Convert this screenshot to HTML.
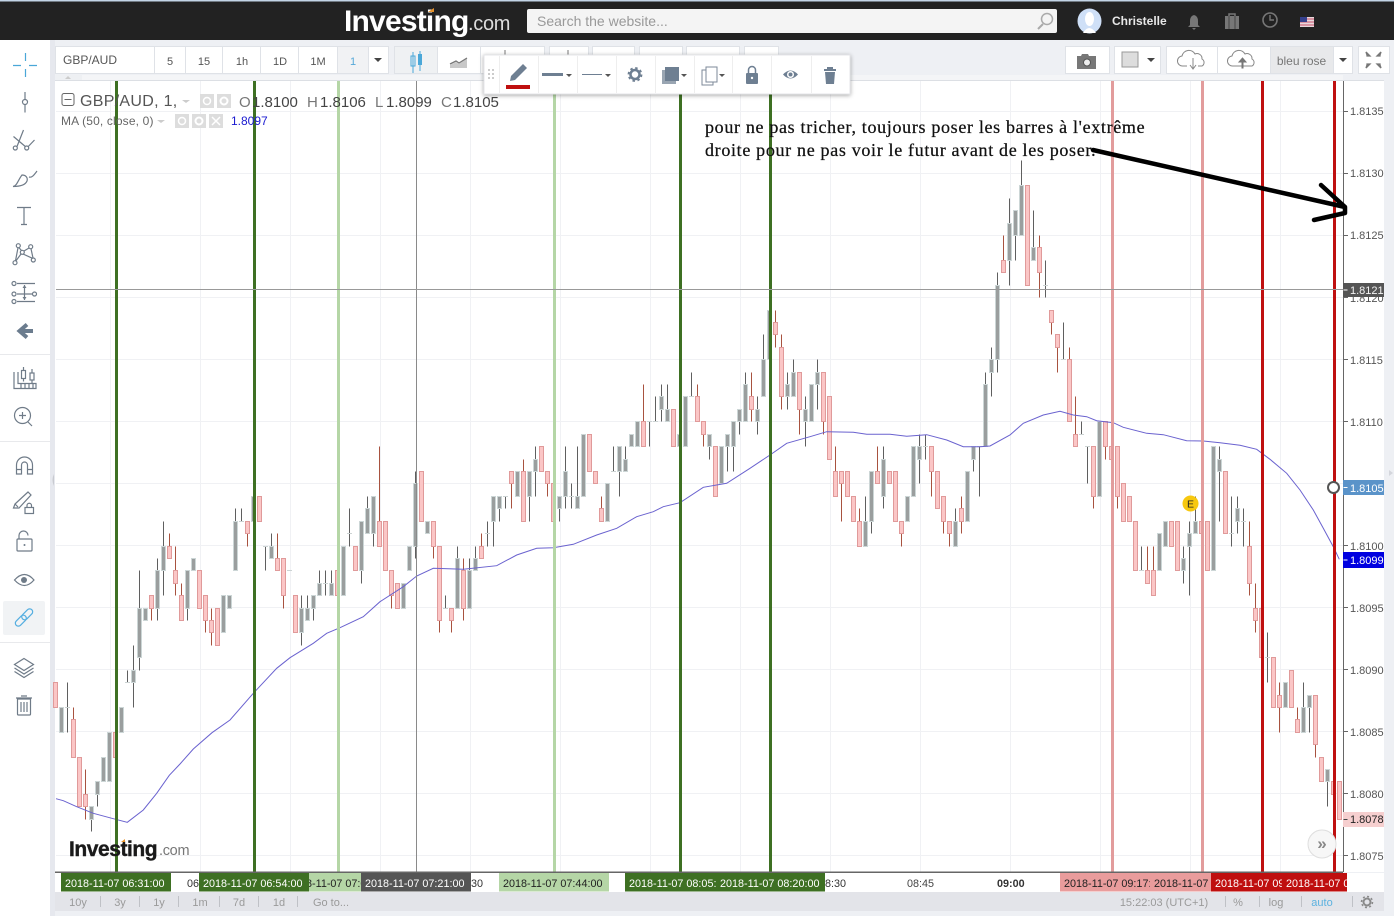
<!DOCTYPE html>
<html><head><meta charset="utf-8"><style>
html,body{margin:0;padding:0;background:#fff;width:1394px;height:916px;overflow:hidden}
svg{display:block}
text{font-family:"Liberation Sans",sans-serif}
.s{fill:none;stroke:#6f7b88;stroke-width:1.2}
.f{fill:#6f7b88}
.tb{font-size:11px;fill:#555;text-anchor:middle}
.px{font-size:11px;fill:#555}
.tm{font-size:10.8px}
.bt{font-size:11px;fill:#9a9a9a;text-anchor:middle}
.cell{fill:#fff;stroke:#dfe2e7}
</style></head><body>
<svg xmlns="http://www.w3.org/2000/svg" width="1394" height="916" viewBox="0 0 1394 916">
<rect width="1394" height="916" fill="#fff"/>
<rect x="50" y="40" width="1344" height="876" fill="#eef0f4"/>
<rect x="50" y="40" width="5" height="876" fill="#e6e8ee"/>
<rect y="0" width="1394" height="40" fill="#222"/>
<rect y="0" width="1394" height="1.5" fill="#c3d4e6"/>
<!-- logo -->
<text x="344" y="31" font-size="30" font-weight="bold" fill="#fff" letter-spacing="-.8">Investing</text>
<text x="468" y="30" font-size="20" fill="#ddd" letter-spacing="-.3">.com</text>
<path d="M428 12l6-4v4z" fill="#e8932a"/>
<!-- search -->
<rect x="527" y="9" width="530" height="24" rx="2" fill="#f4f4f4"/>
<text x="537" y="26" font-size="14" fill="#999">Search the website...</text>
<circle cx="1047" cy="19" r="5.5" fill="none" stroke="#aaa" stroke-width="1.5"/><path d="M1043 24l-5 5" stroke="#aaa" stroke-width="2"/>
<!-- user -->
<ellipse cx="1089.500" cy="21" rx="12" ry="12.500" fill="#cfe0f7"/>
<ellipse cx="1089.500" cy="19" rx="4.500" ry="7" fill="#fff"/><path d="M1083 33q6-10 13 0z" fill="#fff"/>
<text x="1112" y="25" font-size="12" font-weight="bold" fill="#e8e8e8">Christelle</text>
<path d="M1194 15q-4 1-4 6v4l-2 2h12l-2-2v-4q0-5-4-6z M1192 28h4l-2 2z" fill="#777"/>
<path d="M1225 16h14v13h-14z" fill="#777"/><path d="M1229 16v-2h6v2" fill="none" stroke="#777" stroke-width="1.500"/><path d="M1229 16v13M1235 16v13" stroke="#444"/>
<circle cx="1270" cy="20" r="7" fill="none" stroke="#777" stroke-width="1.600"/><path d="M1270 15v5h4" fill="none" stroke="#777" stroke-width="1.400"/>
<rect x="1300" y="17" width="14" height="10" fill="#e8d8dc"/><path d="M1300 19h14M1300 22h14M1300 25h14" stroke="#c8506a" stroke-width="1"/><rect x="1300" y="17" width="7" height="5" fill="#35408c"/>
<!-- toolbar left -->
<rect x="55.500" y="46.500" width="333" height="27" class="cell"/>
<path d="M154.500 47v27M185.500 47v27M222.500 47v27M260.500 47v27M298.500 47v27M337.500 47v27M368.500 47v27" stroke="#dfe2e7"/>
<rect x="338" y="47" width="30" height="26" fill="#f1f2f4"/>
<text x="63" y="64" font-size="12" fill="#555">GBP/AUD</text>
<text x="170" y="65" class="tb">5</text><text x="204" y="65" class="tb">15</text><text x="242" y="65" class="tb">1h</text><text x="280" y="65" class="tb">1D</text><text x="318" y="65" class="tb">1M</text><text x="353" y="65" class="tb" style="fill:#55a8d8">1</text>
<path d="M374 58h8l-4 4z" fill="#444"/>
<rect x="394.500" y="46.500" width="43" height="27" fill="#eff1f3" stroke="#dfe2e7"/>
<rect x="437.500" y="46.500" width="43" height="27" class="cell"/>
<path d="M411 56h4v10h-4zM413 52v21" fill="none" stroke="#4aa7d8"/><rect x="418" y="54" width="4" height="11" fill="#4aa7d8"/><path d="M420 51v20" stroke="#4aa7d8"/>
<path d="M450 68v-3l6-3 3 2 8-6v10z" fill="#c8c8c8"/><path d="M450 64l6-3 3 2 8-5" fill="none" stroke="#777" stroke-width="1.300"/>
<rect x="480.500" y="46.500" width="64" height="27" class="cell"/><rect x="549.500" y="46.500" width="39" height="27" class="cell"/><rect x="592.500" y="46.500" width="42" height="27" class="cell"/><rect x="639.500" y="46.500" width="43" height="27" class="cell"/><rect x="686.500" y="46.500" width="53" height="27" class="cell"/><rect x="744.500" y="46.500" width="34" height="27" class="cell"/>
<path d="M505 50v5M568 50v5M634 0" stroke="#777"/>
<!-- toolbar right -->
<rect x="1065.500" y="46.500" width="44" height="27" class="cell"/>
<rect x="1114.500" y="46.500" width="46" height="27" class="cell"/>
<rect x="1166.500" y="46.500" width="186" height="27" class="cell"/>
<rect x="1271" y="47" width="62" height="26" fill="#e8e9eb"/>
<path d="M1217.500 47v27M1270.500 47v27M1333.500 47v27" stroke="#dfe2e7"/>
<rect x="1358.500" y="46.500" width="31" height="27" class="cell"/>
<path d="M1077 56h4l1-2h6l1 2h7v13h-19z" fill="#777"/><circle cx="1087" cy="62.500" r="3.500" fill="#eee" stroke="#555"/>
<rect x="1122" y="52" width="16" height="15" fill="#ddd" stroke="#999"/><path d="M1147 58h8l-4 4z" fill="#444"/>
<path d="M1187 66h-4a5 5 0 0 1-1-10 7 7 0 0 1 13-2 5 5 0 0 1 7 5 4 4 0 0 1 0 7h-4" fill="none" stroke="#888"/><path d="M1193 58v10m-3-3l3 4 3-4" fill="none" stroke="#888"/>
<path d="M1237 66h-4a5 5 0 0 1-1-10 7 7 0 0 1 13-2 5 5 0 0 1 7 5 4 4 0 0 1 0 7h-4z" fill="none" stroke="#888"/><path d="M1242 68v-6h-3l3.500-4 3.500 4h-3v6z" fill="#777" stroke="#777"/>
<text x="1301.500" y="65" font-size="12" fill="#777" text-anchor="middle">bleu rose</text>
<path d="M1339 58h8l-4 4z" fill="#444"/>
<path d="M1366 52l4 4h-3v-1zM1381 52l-4 4h3v-1zM1366 68l4-4h-3v1zM1381 68l-4-4h3v1z" fill="#777" stroke="#777" stroke-width="1.300"/>
<!-- chart bg -->
<rect x="56" y="75" width="1287" height="5" fill="#f4f5f7"/><rect x="56" y="75" width="26" height="5" fill="#eef0f3"/><path d="M65 79l3-3 3 3z" fill="#ccc"/>
<rect x="55" y="80" width="1329" height="792" fill="#fff"/>
<rect x="55" y="80" width="1329" height="1" fill="#dcdfe4"/>
<g id="grid" stroke="#f0f1f4" stroke-width="1">
<path d="M110.500 81v791M200.500 81v791M290.500 81v791M380.500 81v791M470.500 81v791M560.500 81v791M650.500 81v791M740.500 81v791M830.500 81v791M920.500 81v791M1010.500 81v791M1100.500 81v791M1190.500 81v791M1280.500 81v791"/>
<path d="M56 111.500h1287M56 173.500h1287M56 235.500h1287M56 297.500h1287M56 359.500h1287M56 421.500h1287M56 483.500h1287M56 545.500h1287M56 607.500h1287M56 669.500h1287M56 731.500h1287M56 793.500h1287M56 855.500h1287"/>
</g>
<g id="candles"></g>
<polyline fill="none" stroke="#6a62cf" stroke-width="1" points="56,798.700 63.300,800.700 76.700,806.700 93.300,813.300 113.300,818.700 127.300,822.300 143.300,810 156.700,793.300 169.300,775.300 180,764 193.300,749 212,732.700 230,720 253.300,693.300 276.700,668.300 290,657.700 313.300,643.300 326.700,633.300 340,627.700 363.300,616.700 380,601.700 403.300,586.700 416.700,576 433.300,568.300 463.300,569.300 496.700,565.700 516.700,555 536.700,548.300 553.300,547.700 573.300,544.300 596.700,535 616.700,528.300 636.700,516.700 653.300,511.700 663.300,506.700 680,502.700 703.300,487.300 726.700,483.300 750,468.300 770,455 786.700,443.300 810,436.700 826.700,431.700 853.300,432.300 866.700,434.300 890,434.300 906.700,436.300 926.700,434.700 946.700,440 963.300,446.700 980,446.700 990,446 1010,435 1023.300,423.300 1043.300,415 1060,411.300 1073.300,415 1086.700,416.700 1096.700,420.700 1113.300,422.700 1123.300,427.300 1146.700,433.300 1163.300,434.700 1186.700,440.700 1203.300,441 1220,442.700 1240,445.300 1256.700,449.300 1270,459.300 1286.700,473.300 1300,490 1313.300,510 1323.300,528.300 1333.300,546.700 1339.300,559.300"/>
<!-- vertical drawing lines -->
<rect x="115" y="81" width="3" height="791" fill="#3e7023"/>
<rect x="253" y="81" width="3" height="791" fill="#3e7023"/>
<rect x="337" y="81" width="3" height="791" fill="#b5d6a6"/>
<rect x="416" y="81" width="1" height="791" fill="#8a8a8a"/>
<rect x="553" y="81" width="3" height="791" fill="#b5d6a6"/>
<rect x="679" y="81" width="3" height="791" fill="#3e7023"/>
<rect x="769" y="81" width="3" height="791" fill="#3e7023"/>
<rect x="1111" y="81" width="3" height="791" fill="#e29c9c"/>
<rect x="1201" y="81" width="3" height="791" fill="#e29c9c"/>
<rect x="1261" y="81" width="3" height="791" fill="#bf1010"/>
<rect x="1333" y="81" width="3" height="791" fill="#bf1010"/>
<rect x="56" y="289" width="1287" height="1" fill="#999"/>
<!-- legend -->
<rect x="62" y="93.500" width="12" height="12" rx="2" fill="#fff" stroke="#666"/><path d="M64.500 99.500h7" stroke="#666"/>
<text x="80" y="106" font-size="16" fill="#555" letter-spacing=".3">GBP/AUD, 1,</text>
<path d="M182 100h8l-4 3z" fill="#ccc"/>
<rect x="200" y="94" width="14" height="14" fill="#ddd"/><circle cx="207" cy="101" r="3.500" fill="none" stroke="#fff" stroke-width="1.500"/>
<rect x="217" y="94" width="14" height="14" fill="#ddd"/><circle cx="224" cy="101" r="3.500" fill="none" stroke="#fff" stroke-width="2"/>
<g font-size="15">
<text x="239" y="107" fill="#777">O</text><text x="252" y="107" fill="#444">1.8100</text>
<text x="307" y="107" fill="#777">H</text><text x="320" y="107" fill="#444">1.8106</text>
<text x="375" y="107" fill="#777">L</text><text x="386" y="107" fill="#444">1.8099</text>
<text x="441" y="107" fill="#777">C</text><text x="453" y="107" fill="#444">1.8105</text>
</g>
<text x="61" y="125" font-size="12" fill="#666" letter-spacing=".15">MA (50, close, 0)</text>
<path d="M157 120h8l-4 3z" fill="#ccc"/>
<rect x="175" y="114" width="14" height="14" fill="#ddd"/><circle cx="182" cy="121" r="3.500" fill="none" stroke="#fff" stroke-width="1.500"/>
<rect x="192" y="114" width="14" height="14" fill="#ddd"/><circle cx="199" cy="121" r="3.500" fill="none" stroke="#fff" stroke-width="2"/>
<rect x="209" y="114" width="14" height="14" fill="#ddd"/><path d="M212 117l8 8m0-8l-8 8" stroke="#fff" stroke-width="1.500"/>
<text x="231" y="125" font-size="12" fill="#1a1ad0">1.8097</text>
<!-- annotation -->
<text x="705" y="133" font-size="18" fill="#111" style="font-family:'Liberation Serif',serif" letter-spacing=".67" stroke="#111" stroke-width=".25">pour ne pas tricher, toujours poser les barres à l'extrême</text>
<text x="705" y="156" font-size="18" fill="#111" style="font-family:'Liberation Serif',serif" letter-spacing=".67" stroke="#111" stroke-width=".25">droite pour ne pas voir le futur avant de les poser.</text>
<!-- E badge -->
<circle cx="1190.500" cy="503.500" r="8" fill="#f7c80f"/><text x="1190.500" y="507.500" font-size="10.500" text-anchor="middle" fill="#222">E</text>
<!-- logo chart -->
<text x="69" y="856" font-size="21" font-weight="bold" fill="#1a1a1a" letter-spacing="-.45" stroke="#1a1a1a" stroke-width=".4">Investing</text>
<text x="159" y="855" font-size="14.500" fill="#777" letter-spacing="-.3">.com</text>
<path d="M121 842l4-3v3z" fill="#e8932a"/>
<!-- scroll btn -->
<circle cx="1322" cy="844" r="14" fill="#f7f7f7" stroke="#dedede"/>
<text x="1322" y="849" font-size="17" text-anchor="middle" fill="#888" font-weight="bold">»</text>
<!-- price axis -->
<rect x="1343.500" y="81" width="41" height="791" fill="#fff"/>
<rect x="1343" y="81" width="1" height="791" fill="#666"/>
<g stroke="#666"><path d="M1344 111.500h4M1344 173.500h4M1344 235.500h4M1344 297.500h4M1344 359.500h4M1344 421.500h4M1344 545.500h4M1344 607.500h4M1344 669.500h4M1344 731.500h4M1344 793.500h4M1344 855.500h4"/></g>
<g class="px">
<text class="px" x="1350" y="115">1.8135</text><text class="px" x="1350" y="177">1.8130</text><text class="px" x="1350" y="239">1.8125</text><text class="px" x="1350" y="302">1.8120</text><text class="px" x="1350" y="364">1.8115</text><text class="px" x="1350" y="426">1.8110</text><text class="px" x="1350" y="550">1.8100</text><text class="px" x="1350" y="612">1.8095</text><text class="px" x="1350" y="674">1.8090</text><text class="px" x="1350" y="736">1.8085</text><text class="px" x="1350" y="798">1.8080</text><text class="px" x="1350" y="860">1.8075</text>
</g>
<rect x="1343" y="283" width="44" height="14" fill="#555"/><path d="M1343.500 290h4" stroke="#fff"/><text x="1350" y="294" font-size="11" fill="#f4f4f4">1.8121</text>
<rect x="1343" y="480" width="44" height="15" fill="#5a93c9"/><path d="M1343.500 487.500h4" stroke="#fff"/><text x="1350" y="492" font-size="11" fill="#fff">1.8105</text>
<rect x="1343" y="552" width="44" height="16" fill="#0000e0"/><path d="M1343.500 560h4" stroke="#fff"/><text x="1350" y="564" font-size="11" fill="#fff">1.8099</text>
<rect x="1343" y="812" width="44" height="15" fill="#f6cfcf"/><path d="M1343.500 819.500h4" stroke="#444"/><text x="1350" y="823" font-size="11" fill="#222">1.8078</text>
<circle cx="1333.500" cy="487.500" r="5.500" fill="#fff" stroke="#555" stroke-width="2"/>
<!-- arrow -->
<path d="M1093 150 L1345 207 M1321 185 L1345 207 L1345 213 L1314 220" fill="none" stroke="#000" stroke-width="4.500" stroke-linecap="round" stroke-linejoin="round"/>
<rect x="1384" y="80" width="10" height="836" fill="#eef0f4"/><path d="M1389 470l4 3-4 3z" fill="#d4d6dc"/>
<path d="M54 474q-3 6 0 12z" fill="#c8cad0"/>
<!-- time axis -->
<rect x="55" y="873" width="1329" height="19" fill="#fff"/>
<rect x="55" y="871.500" width="1288" height="1.500" fill="#666"/>
<g stroke="#666"><path d="M116.500 872v4M254.500 872v4M338.500 872v4M416.500 872v4M554.500 872v4M680.500 872v4M770.500 872v4M1112.500 872v4M1202.500 872v4M1262.500 872v4M1334.500 872v4"/></g>
<text class="tm" x="187" y="887" fill="#333">06</text>
<text class="tm" x="471" y="887" fill="#333">30</text>
<text class="tm" x="825" y="887" fill="#333">8:30</text>
<text class="tm" x="907" y="887" fill="#444">08:45</text>
<text class="tm" x="997" y="887" fill="#333" font-weight="bold">09:00</text>
<rect x="61" y="873" width="110" height="18.500" fill="#3e7023"/><text class="tm" x="65" y="887" fill="#fff">2018-11-07 06:31:00</text>
<rect x="199" y="873" width="110" height="18.500" fill="#3e7023"/><text class="tm" x="203" y="887" fill="#fff">2018-11-07 06:54:00</text>
<svg x="309" y="873" width="52" height="19"><rect width="52" height="18.500" fill="#b5d6a6"/><text class="tm" x="-21" y="14" fill="#222">2018-11-07 07:00:00</text></svg>
<rect x="361" y="873" width="110" height="18.500" fill="#555"/><text class="tm" x="365" y="887" fill="#fff">2018-11-07 07:21:00</text>
<rect x="499" y="873" width="110" height="18.500" fill="#b5d6a6"/><text class="tm" x="503" y="887" fill="#222">2018-11-07 07:44:00</text>
<svg x="625" y="873" width="91" height="19"><rect width="91" height="18.500" fill="#3e7023"/><text class="tm" x="4" y="14" fill="#fff">2018-11-07 08:05:00</text></svg>
<rect x="716" y="873" width="109" height="18.500" fill="#3e7023"/><text class="tm" x="720" y="887" fill="#fff">2018-11-07 08:20:00</text>
<svg x="1060" y="873" width="90" height="19"><rect width="90" height="18.500" fill="#e99c9c"/><text class="tm" x="4" y="14" fill="#222">2018-11-07 09:17:00</text></svg>
<svg x="1150" y="873" width="61" height="19"><rect width="61" height="18.500" fill="#e99c9c"/><text class="tm" x="4" y="14" fill="#222">2018-11-07 09:32:00</text></svg>
<svg x="1211" y="873" width="71" height="19"><rect width="71" height="18.500" fill="#bf0f0f"/><text class="tm" x="4" y="14" fill="#fff">2018-11-07 09:42:00</text></svg>
<svg x="1282" y="873" width="65" height="19"><rect width="65" height="18.500" fill="#bf0f0f"/><text class="tm" x="4" y="14" fill="#fff">2018-11-07 09:54:00</text></svg>
<!-- bottom bar -->
<rect x="55" y="892" width="1329" height="19" fill="#e3e4e9"/>
<text class="bt" x="78" y="906">10y</text><text class="bt" x="120" y="906">3y</text><text class="bt" x="159" y="906">1y</text><text class="bt" x="200" y="906">1m</text><text class="bt" x="239" y="906">7d</text><text class="bt" x="279" y="906">1d</text><text class="bt" x="331" y="906">Go to...</text>
<text class="bt" x="1164" y="906">15:22:03 (UTC+1)</text><text class="bt" x="1238" y="906">%</text><text class="bt" x="1276" y="906">log</text><text class="bt" x="1322" y="906" style="fill:#5cb2e0">auto</text>
<path d="M100.500 896v11M139.500 896v11M178.500 896v11M219.500 896v11M258.500 896v11M297.500 896v11M1225.500 896v11M1259.500 896v11M1301.500 896v11M1352.500 896v11" stroke="#bfc1c6"/>
<circle cx="1367" cy="902" r="3.500" fill="none" stroke="#8a8a8a" stroke-width="2"/><circle cx="1367" cy="902" r="5.500" fill="none" stroke="#8a8a8a" stroke-width="1.500" stroke-dasharray="2 2.300"/>
<!-- floating toolbar -->
<rect x="484" y="55" width="366" height="39" fill="#fff" stroke="#e4e5e8" style="filter:drop-shadow(0 1px 2px rgba(0,0,0,.35))"/>
<path d="M499.500 56v37M538.500 56v37M577.500 56v37M616.500 56v37M655.500 56v37M694.500 56v37M732.500 56v37M771.500 56v37M811.500 56v37" stroke="#eee"/>
<g fill="#ccc"><rect x="488" y="69" width="2" height="2"/><rect x="492" y="69" width="2" height="2"/><rect x="488" y="73" width="2" height="2"/><rect x="492" y="73" width="2" height="2"/><rect x="488" y="77" width="2" height="2"/><rect x="492" y="77" width="2" height="2"/></g>
<path d="M510 81l1-5 12-12 4 4-12 12z" fill="#6e7f92"/><rect x="506" y="85" width="24" height="4" fill="#bf0f0f"/>
<rect x="542" y="73" width="21" height="3" fill="#6e7f92"/><path d="M566 74h6l-3 3z" fill="#555"/>
<rect x="582" y="74" width="20" height="1" fill="#6e7f92"/><path d="M605 74h6l-3 3z" fill="#555"/>
<circle cx="635" cy="74.500" r="4.500" fill="none" stroke="#6e7f92" stroke-width="2.500"/><circle cx="635" cy="74.500" r="6.500" fill="none" stroke="#6e7f92" stroke-width="1.800" stroke-dasharray="2.500 2.600"/>
<rect x="662" y="70" width="14" height="14" fill="#6e7f92" opacity=".7"/><rect x="665" y="67" width="14" height="14" fill="#6e7f92"/><path d="M681 74h6l-3 3z" fill="#555"/>
<rect x="702" y="70" width="11" height="15" fill="#fff" stroke="#7d8a99"/><rect x="706" y="67" width="11" height="15" fill="#fff" stroke="#7d8a99"/><path d="M719 74h6l-3 3z" fill="#555"/>
<rect x="746" y="73" width="12" height="11" rx="1" fill="#6e7f92"/><path d="M748.500 73v-3a3.500 3.500 0 0 1 7 0v3" fill="none" stroke="#6e7f92" stroke-width="1.500"/><circle cx="752" cy="78" r="1.200" fill="#fff"/>
<path d="M783 74.500q7.500-8 15 0q-7.500 8-15 0z" fill="#6e7f92"/><circle cx="790.500" cy="74.500" r="3.500" fill="#fff"/><circle cx="790.500" cy="74.500" r="2" fill="#6e7f92"/>
<path d="M824 69h12v2h-12zM825 72h10l-1 12h-8z" fill="#6e7f92"/><rect x="827" y="67" width="6" height="2" fill="#6e7f92"/>
<!-- sidebar -->
<rect x="0" y="40" width="50" height="876" fill="#fff"/>
<path d="M13 65.500h8M29 65.500h8M25.500 53v8M25.500 69v8" stroke="#4aa7d8" stroke-width="1.200"/>
<path d="M25 92v7.500M25 104.500v8" class="s"/><circle cx="25" cy="102" r="2.500" class="s"/>
<g class="s"><circle cx="15.300" cy="148" r="2"/><circle cx="26.700" cy="148" r="2"/><path d="M17 146.500L23.500 130M28.300 146.500L34.500 140M13.500 136.500L25.300 146.500"/></g>
<path d="M13 186.500C17 186 18 180 22 175C26 175 28 178 27 181C25 186 18 186.500 13 186.500ZM29 177C32 178 34 175 37 171" class="s"/>
<path d="M17 207.500h14M24 207.500v17M21 224.500h6" class="s"/>
<g class="s"><circle cx="18.300" cy="245.700" r="2"/><circle cx="30.700" cy="246.700" r="2"/><circle cx="22.300" cy="252.300" r="2"/><circle cx="15" cy="262.700" r="2"/><circle cx="33.300" cy="260" r="2"/><path d="M18.800 247.500L21.500 250.500M24 251L29 248M23 254L32.500 258.300M16 260.800L21 254M15.500 260.800L18 247.800M31 248.700L33 258"/></g>
<g class="s"><circle cx="14" cy="283.500" r="2"/><circle cx="14" cy="294" r="2"/><circle cx="14" cy="301.500" r="2"/><circle cx="34.500" cy="294" r="2"/><path d="M17 283.500h18M17 294h15M17 301.500h18M24.500 285v15"/></g>
<path d="M22.500 288l2-3 2 3zM22.500 297l2 3 2-3z" class="f"/>
<path d="M27 324.500L19.500 331L27 337.500M20 331H33" fill="none" stroke="#6b7c8e" stroke-width="4"/>
<rect x="0" y="354" width="50" height="1" fill="#e8e9ec"/>
<g class="s"><path d="M14 372v16.500h22v-5H18V372M21 384v4M25 384v4M29 384v4M33 384v4"/><rect x="21.500" y="370.500" width="4" height="8"/><path d="M23.500 367v3.500M23.500 378.500v3"/><rect x="30" y="373" width="4" height="7"/><path d="M32 369v4M32 380v3"/></g>
<g class="s"><circle cx="22.500" cy="415.500" r="8"/><path d="M19 415.500h7M22.500 412v7M28 422l4 4"/></g>
<rect x="0" y="441" width="50" height="1" fill="#e8e9ec"/>
<path d="M16.500 474V465A8 8 0 0 1 32.500 465V474H27.500V465A3 3 0 0 0 21.500 465V474ZM16.500 469.500h5M27.500 469.500h5" class="s"/>
<path d="M13.500 508l1.500-4 13-12 3 3-12 13zM15 504l3 3" class="s"/><rect x="25" y="507.500" width="8.500" height="6" class="s"/><path d="M27 507.500v-2a2 2 0 0 1 4.500 0v2" class="s"/>
<rect x="17" y="539" width="15" height="12" rx="1" class="s"/><path d="M19 539v-3.500a4.500 4.500 0 0 1 9 0" class="s"/><circle cx="24.500" cy="545" r="1" class="f"/>
<path d="M14.500 580q10-11 19.500 0q-9.500 11-19.500 0z" class="s"/><circle cx="24" cy="580" r="3" class="f"/>
<rect x="3" y="601" width="42" height="34" rx="2" fill="#f1f3f5"/>
<g transform="rotate(-45 24 617.500)" fill="none" stroke="#55aee0" stroke-width="1.200"><rect x="13" y="614.500" width="13" height="6" rx="3"/><rect x="22" y="614.500" width="13" height="6" rx="3"/></g>
<rect x="0" y="642" width="50" height="1" fill="#e8e9ec"/>
<path d="M24 658.500l9.500 6-9.500 6-9.500-6zM14.500 668l9.500 6 9.500-6M14.500 671.500l9.500 6 9.500-6" class="s"/>
<path d="M17.500 699h13v15q0 1-1 1h-11q-1 0-1-1zM16 698h16M21 696h6M21 702v10M24 702v10M27 702v10" class="s"/>
</svg>
<script>
var D="p 89 87;g 87 85;d 87 89 85;p 86 83 87;p 83 79;p 80 79 82 78;g 79 78 0 77;g 81 80 0 79;g 83 81;g 85 81;p 85 83 0 82;g 87 85;d 89 90 89;g 90 89 92 87;g 95 91 98 90;g 95 94;p 96 95 0 94;g 98 95 99 94;g 100 98 102 96;p 100 99 101;p 98 97 100 96;p 96 94 97;g 98 95 0 94;g 99 98;p 98 95;p 96 94 0 93;p 94 93 95 92;p 95 92;g 96 93;g 96 95;g 102 98 103;d 102 103 102;p 102 101 0 100;g 104 102;p 104 102;d 100 100 98;g 100 99 101;p 99 98 101;p 99 96 0 95;d 98 98 98;p 96 93;g 95 93 96 92;g 95 94 96;g 96 95 0 94;g 97 96 98;d 97 98 96;g 97 96 98;p 98 96;g 100 96;d 101 103 100;p 100 98;g 102 98 0 97;g 103 101 104;g 104 101 0 100;p 102 100 108;p 102 98;p 98 96 0 95;p 97 95;g 97 95;g 100 98;g 105 100 106 99;p 106 102;g 102 101;p 102 100 0 99;p 100 94 0 93;d 95 96 95;p 95 94 0 93;g 99 95 100;p 98 95 99 94;g 98 95 99;g 99 98 100;p 100 99 101;d 101 102 100;g 104 102 0 100;g 104 103 0 102;d 104 104 103;p 106 105 0 103;g 106 104;p 106 102 107;g 106 104 0 102;g 107 106 108 104;p 108 106;p 106 105 0 104;p 105 102;g 104 103 0 102;g 106 104 108 103;d 104 105 103;g 104 103 108;g 109 104;p 109 106;p 106 105;p 103 102 104;g 105 102;d 106 108 106;g 108 106 0 104;g 107 106 108;g 109 108;g 110 108;p 110 108 113;d 110 110 108;d 110 112 110;g 112 111 113 110;g 111 110 113;p 111 108;g 109 108;g 112 108;d 112 114 112;p 112 110 113;p 110 109 0 108;g 109 108 0 107;p 108 104;g 108 105;g 109 108 0 106;g 110 108 0 106;g 111 110 0 109;g 113 110 114;p 112 111 114 110;g 111 110 112 109;g 115 112 117;g 119 115;p 118 117 119 116;p 116 112 117 111;g 113 112 114 111;g 114 112 115;p 114 111 0 109;g 111 110 112 108;g 113 110;g 114 113 115 111;p 114 110 0 109;p 112 107;p 106 104 108;p 106 105 0 102;p 106 104;p 104 102;p 102 100 103;g 102 100 104;g 106 102 0 101;p 106 105 108;g 107 104 108 103;p 106 105;p 106 102;p 102 101 0 100;g 104 102;g 108 104;g 108 107 109 105;d 108 109 107;p 108 106 0 104;p 106 103;p 104 102 0 101;p 102 101 0 100;g 102 100 103;p 103 102 104 101;g 106 102;g 108 107 0 106;d 108 108 104;g 113 108 114;g 115 114 116 112;g 121 115 122 114;p 123 122 125;g 126 123 128 121;g 127 125 0 123;g 129 125 131;p 129 121;g 124 123 127;p 124 122 125 120;d 121 123 120;p 119 118 0 117;p 117 116 0 114;d 115 118 115;p 115 110 116;p 109 108 112;d 109 110 109;d 108 108 105;p 108 104 0 103;g 110 104;p 110 108 0 107;p 108 107 110 106;p 108 104 0 103;p 105 102;p 104 102;p 102 98;d 98 100 98;p 98 97 100;p 98 96 100;g 101 98;g 102 100;p 102 100;p 102 98;g 99 98 100 97;g 101 100 102 96;g 102 101 104;p 102 101 104;p 102 98;g 108 98;g 107 106 108 102;p 106 101;d 101 104 100;g 103 102 104 101;d 102 103 100;p 100 97 102 96;p 95 94 97 93;p 95 91;d 91 93 89;p 91 87;p 88 87 89 85;g 89 87;p 90 87;p 86 85 87;g 87 85 89;g 88 87 0 85;p 88 84 0 83;p 83 81;g 82 81 0 79;p 81 80;p 81 78".split(";");
function Y(p){return Math.round(545.5+(100-p)*12.42)+.5;}
var NS="http://www.w3.org/2000/svg",G=document.getElementById("candles");
function el(n,o){var e=document.createElementNS(NS,n);for(var k in o)e.setAttribute(k,o[k]);G.appendChild(e);}
for(var i=0;i<D.length;i++){
 var a=D[i].split(" "),t=a[0],x=115+6*(i-10);
 var wc=t=="p"?"#a8523f":"#5f5f5f";
 if(t=="d"){
  var p=+a[1],hi=+a[2],lo=+a[3];
  if(hi!=lo)el("path",{d:"M"+(x+.5)+" "+Y(hi)+"V"+Y(lo),stroke:wc});
  el("path",{d:"M"+(x-2)+" "+Y(p)+"h5",stroke:"#ccd3d3"});
 }else{
  var tp=+a[1],bt=+a[2],hi=+(a[3]||0),lo=+(a[4]||0);
  if(hi)el("path",{d:"M"+(x+.5)+" "+Y(hi)+"V"+Y(tp),stroke:wc});
  if(lo)el("path",{d:"M"+(x+.5)+" "+Y(bt)+"V"+Y(lo),stroke:wc});
  el("rect",{x:x-1.5,y:Y(tp),width:4,height:Y(bt)-Y(tp),fill:t=="p"?"#fbc6c6":"#9a9e9e",stroke:t=="p"?"#e09a9a":"#ccd6d6"});
 }
}
</script>
</body></html>
